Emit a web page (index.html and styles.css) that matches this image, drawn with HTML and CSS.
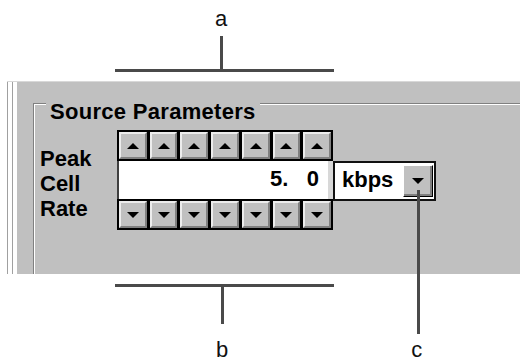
FILE: index.html
```html
<!DOCTYPE html>
<html lang="en">
<head>
    <meta charset="UTF-8">
    <meta name="viewport" content="width=device-width, initial-scale=1.0">
    <title>Source Parameters</title>
    <link rel="stylesheet" href="styles.css">
</head>
<body>
    <!-- callout a: over the up buttons -->
    <div class="callout callout-top">
        <span class="callout-label">a</span>
        <div class="stem"></div>
        <div class="bar"></div>
    </div>

    <div class="panel">
        <div class="group">
            <div class="group-inner">
                <div class="group-title">Source Parameters</div>
                <div class="param">
                    <div class="param-label">Peak<br>Cell<br>Rate</div>
                    <div class="spinner">
                        <div class="spin-row">
                            <span class="spin-btn"><i class="arrow-up"></i></span>
                            <span class="spin-btn"><i class="arrow-up"></i></span>
                            <span class="spin-btn"><i class="arrow-up"></i></span>
                            <span class="spin-btn"><i class="arrow-up"></i></span>
                            <span class="spin-btn"><i class="arrow-up"></i></span>
                            <span class="spin-btn"><i class="arrow-up"></i></span>
                            <span class="spin-btn"><i class="arrow-up"></i></span>
                        </div>
                        <div class="value">5.   0</div>
                        <div class="spin-row">
                            <span class="spin-btn"><i class="arrow-down"></i></span>
                            <span class="spin-btn"><i class="arrow-down"></i></span>
                            <span class="spin-btn"><i class="arrow-down"></i></span>
                            <span class="spin-btn"><i class="arrow-down"></i></span>
                            <span class="spin-btn"><i class="arrow-down"></i></span>
                            <span class="spin-btn"><i class="arrow-down"></i></span>
                            <span class="spin-btn"><i class="arrow-down"></i></span>
                        </div>
                    </div>
                    <div class="unit">
                        <span>kbps</span>
                        <span class="drop"><i class="arrow-down"></i></span>
                    </div>
                </div>
            </div>
        </div>
    </div>

    <!-- callout b: under the down buttons -->
    <div class="callout callout-bottom">
        <div class="bar"></div>
        <div class="stem"></div>
    </div>
    <div class="bottom-labels">
        <span class="callout-label">b</span>
        <span class="callout-label label-c">c</span>
    </div>

    <!-- callout c: leader from the unit drop button -->
    <div class="leader-c"></div>
</body>
</html>
```

FILE: styles.css
```css
/* Basic Styles */
body {
    margin: 0;
    width: 520px;
    height: 361px;
    overflow: hidden;
    position: relative;
    background-color: #ffffff;
    font-family: "Liberation Sans", Arial, sans-serif;
    color: #000;
}

/* Callouts */
.callout {
    margin-left: 115px;
    width: 219px;
}

.callout-label {
    display: block;
    font-size: 22px;
    line-height: 22px;
    color: #111;
}

.stem {
    width: 3px;
    background-color: #4a4a4a;
}

.bar {
    height: 3px;
    background-color: #4a4a4a;
}

.callout-top {
    height: 81px;
    box-sizing: border-box;
    padding-top: 8px;
}

.callout-top .callout-label {
    margin-left: 100px;
}

.callout-top .stem {
    height: 33px;
    margin-top: 6px;
    margin-left: 105px;
}

.callout-bottom {
    margin-top: 10px;
}

.callout-bottom .stem {
    height: 37px;
    margin-left: 106px;
}

.bottom-labels {
    display: flex;
    margin-top: 15px;
    padding-left: 216px;
}

.label-c {
    margin-left: 183px;
}

.leader-c {
    position: absolute;
    left: 417px;
    top: 190px;
    width: 3px;
    height: 144px;
    background-color: #4a4a4a;
}

/* Window panel */
.panel {
    height: 193px;
    margin-left: 7px;
    padding-left: 26px;
    box-sizing: border-box;
    overflow: hidden;
    border-top: 1px solid #d8d8d8;
    background: linear-gradient(to right, #a0a0a0 0 1px, #fff 1px 5px, #a0a0a0 5px 6px, #fff 6px 10px, #c0c0c0 10px);
}

.group {
    margin-top: 21px;
    margin-right: -40px;
    height: 300px;
    border-top: 1px solid #808080;
    border-left: 1px solid #808080;
}

.group-inner {
    height: 100%;
    border-top: 1px solid #fff;
    border-left: 1px solid #fff;
    padding-left: 5px;
}

.group-title {
    display: inline-block;
    margin: -13px 0 0 6px;
    padding: 0 4px;
    background-color: #c0c0c0;
    font-size: 22px;
    line-height: 24px;
    font-weight: bold;
    letter-spacing: 0.3px;
}

.param {
    display: flex;
    align-items: flex-start;
    margin-top: 6px;
    font-size: 22px;
    font-weight: bold;
}

.param-label {
    width: 77px;
    margin-top: 16px;
    line-height: 25px;
}

/* Digit spinner */
.spinner {
    width: 216px;
}

.spin-row {
    display: flex;
    gap: 3px;
    height: 31px;
    padding: 2px;
    box-sizing: border-box;
    background-color: #000;
}

.spin-btn {
    flex: 1;
    display: flex;
    align-items: center;
    justify-content: center;
    background-color: #c0c0c0;
    border: 2px solid;
    border-color: #ececec #808080 #808080 #ececec;
}

.arrow-up {
    width: 0;
    height: 0;
    border-left: 6px solid transparent;
    border-right: 6px solid transparent;
    border-bottom: 6px solid #000;
}

.arrow-down {
    width: 0;
    height: 0;
    border-left: 6px solid transparent;
    border-right: 6px solid transparent;
    border-top: 6px solid #000;
}

.value {
    height: 38px;
    box-sizing: border-box;
    background-color: #fff;
    border-left: 2px solid #404040;
    border-right: 5px solid #d8d8d8;
    padding-right: 9px;
    text-align: right;
    line-height: 35px;
    white-space: pre;
}

/* Unit drop list */
.unit {
    display: flex;
    align-items: center;
    justify-content: space-between;
    width: 103px;
    height: 40px;
    margin-top: 31px;
    box-sizing: border-box;
    padding: 0 1px 3px 7px;
    border: 2px solid #111;
    background-color: #fff;
    line-height: 24px;
}

.drop {
    display: flex;
    align-items: center;
    justify-content: center;
    width: 30px;
    height: 32px;
    margin-bottom: -3px;
    box-sizing: border-box;
    background-color: #c0c0c0;
    border: 1px solid;
    border-color: #fff #000 #000 #fff;
    box-shadow: inset -2px -2px 0 #808080;
}
```
